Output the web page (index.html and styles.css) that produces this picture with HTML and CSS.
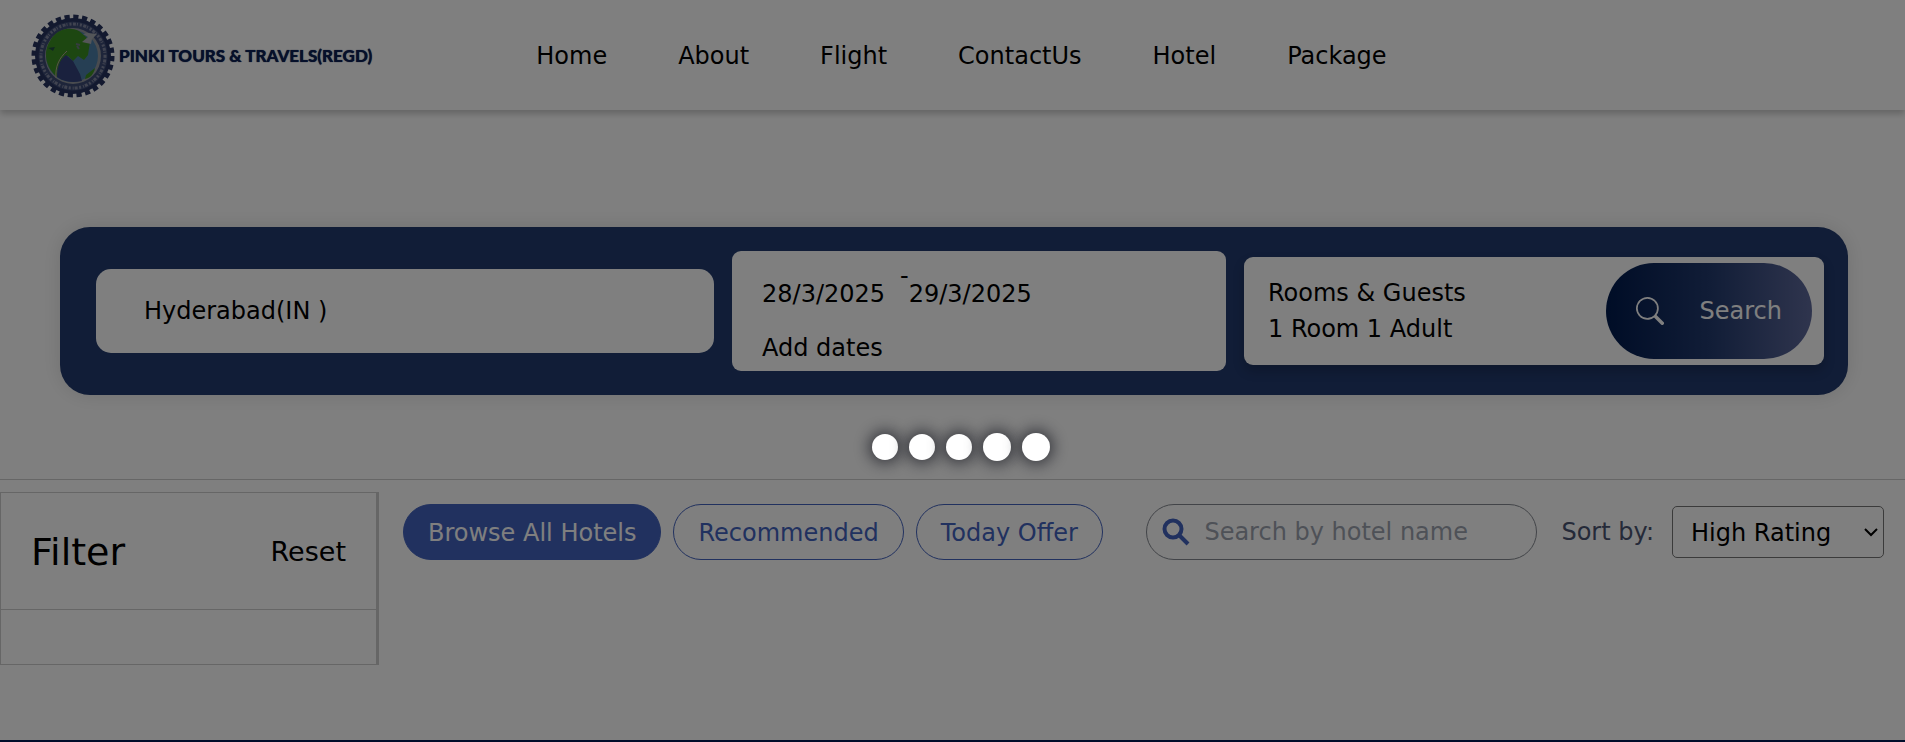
FILE: index.html
```html
<!DOCTYPE html>
<html lang="en">
<head>
  <meta charset="UTF-8">
  <meta name="viewport" content="width=device-width, initial-scale=1.0">
  <title>Pinki Tours &amp; Travels - Hotels</title>
  <link rel="stylesheet" href="styles.css">
</head>
<body>

  <header class="header">
    <a href="#" class="logo">
      <svg class="logo-badge" viewBox="0 0 86 86" aria-hidden="true">
        <circle cx="43" cy="43" r="38" fill="#3c4a74"/>
        <circle cx="43" cy="43" r="39" fill="none" stroke="#26335f" stroke-width="5" stroke-dasharray="5.2 3.55"/>
        <circle cx="43" cy="43" r="36" fill="none" stroke="#26335f" stroke-width="3"/>
        <circle cx="43" cy="43" r="32" fill="none" stroke="#8086a0" stroke-width="3" stroke-dasharray="2 1.5 3 1 1 2"/>
        <circle cx="43" cy="43" r="28" fill="#93979f"/>
        <circle cx="42" cy="43" r="26" fill="#4d7fa8"/>
        <path d="M27 64C15 54 13 38 20 28C26 17 38 13 49 18L56 24L60 29L58 42L54 47L48 43L43 48L38 43L34 45C28 51 27 57 27 64Z" fill="#3b8f22"/>
        <path d="M27 64C27 54 30 46 36 42L43 48L50 61L52 68C43 70 34 69 27 64Z" fill="#34437c"/>
        <path d="M56 62L65 55C64 61 60 65 55 66Z" fill="#3b8f22"/>
        <path d="M26 65C25 54 29 45 37 38" fill="none" stroke="#b5a698" stroke-width="1"/>
        <path d="M52 29L58 24L53 21L58 20L67 21L62 26L61 31Z" fill="#a8acb2"/>
        <path d="M46 31L50 32M47 33L49 36" stroke="#6c7880" stroke-width="2"/>
        <path d="M18 35L25 34L23 38L20 36" fill="#214c45"/>
      </svg>
      <span class="logo-text">PINKI TOURS &amp; TRAVELS(REGD)</span>
    </a>
    <nav class="nav">
      <a href="#">Home</a>
      <a href="#">About</a>
      <a href="#">Flight</a>
      <a href="#">ContactUs</a>
      <a href="#">Hotel</a>
      <a href="#">Package</a>
    </nav>
  </header>

  <form class="search-bar">
    <input type="text" class="location" aria-label="Location" value="Hyderabad(IN )">

    <div class="dates">
      <div class="date-row">
        <span class="date">28/3/2025</span>
        <span class="dash">-</span>
        <span class="date">29/3/2025</span>
      </div>
      <div>Add dates</div>
    </div>

    <div class="rooms">
      <div>
        <div>Rooms &amp; Guests</div>
        <div>1 Room 1 Adult</div>
      </div>
      <button type="button" class="search-btn">
        <svg width="28" height="28" viewBox="0 0 16 16" fill="currentColor" aria-hidden="true">
          <path d="M11.742 10.344a6.5 6.5 0 1 0-1.397 1.398h-.001q.044.06.098.115l3.85 3.85a1 1 0 0 0 1.415-1.414l-3.85-3.85a1 1 0 0 0-.115-.1zM12 6.5a5.5 5.5 0 1 1-11 0 5.5 5.5 0 0 1 11 0"/>
        </svg>
        <span>Search</span>
      </button>
    </div>
  </form>

  <main class="results">
    <aside class="filter">
      <div class="filter-head">
        <h2>Filter</h2>
        <button type="button" class="reset">Reset</button>
      </div>
      <div class="filter-body"></div>
    </aside>

    <section class="toolbar">
      <div class="tabs">
        <button type="button" class="tab active">Browse All Hotels</button>
        <button type="button" class="tab">Recommended</button>
        <button type="button" class="tab">Today Offer</button>
      </div>
      <div class="tools">
        <div class="hotel-search">
          <svg width="28" height="28" viewBox="0 0 28 28" fill="none" stroke="#4262be" aria-hidden="true">
            <circle cx="11" cy="11" r="8.5" stroke-width="4"/>
            <path d="M17 17L26 26" stroke-width="4"/>
          </svg>
          <input type="text" aria-label="Hotel name" placeholder="Search by hotel name">
        </div>
        <label for="sort">Sort by:</label>
        <div class="select-wrap">
          <select id="sort">
            <option>High Rating</option>
            <option>Low Rating</option>
          </select>
          <svg class="caret" width="14" height="10" viewBox="0 0 14 10" fill="none" stroke="#000" stroke-width="2" aria-hidden="true">
            <path d="M1 2L7 8L13 2"/>
          </svg>
        </div>
      </div>
    </section>
  </main>

  <footer class="footer"></footer>

  <!-- loading overlay -->
  <div class="overlay">
    <span class="dot"></span>
    <span class="dot"></span>
    <span class="dot"></span>
    <span class="dot big"></span>
    <span class="dot big"></span>
  </div>

</body>
</html>
```
FILE: styles.css
```css
* {
  box-sizing: border-box;
}
body {
  margin: 0;
  min-height: 100vh;
  display: flex;
  flex-direction: column;
  background: #fff;
  color: #000;
  font-family: Verdana, "DejaVu Sans", sans-serif;
  font-size: 24px;
  line-height: 36px;
}
input, select, button {
  font: inherit;
  color: inherit;
}
button {
  border: none;
  background: none;
  cursor: pointer;
}

/* header */
.header {
  display: flex;
  align-items: center;
  gap: 164px;
  height: 110px;
  padding: 2px 30px 0;
  box-shadow: 0 4px 6px rgba(0, 0, 0, 0.2);
}
.logo {
  display: flex;
  align-items: center;
  color: #0d2054;
  text-decoration: none;
}
.logo-badge {
  width: 86px;
  height: 86px;
}
.logo-text {
  padding-left: 3px;
  font-family: Lato, sans-serif;
  font-size: 17px;
  font-weight: 900;
  text-shadow: 0 0 1px #0d2054;
  white-space: nowrap;
}
.nav {
  display: flex;
  gap: 71px;
}
.nav a {
  color: #000;
  text-decoration: none;
}

/* search bar */
.search-bar {
  display: grid;
  grid-template-columns: 618fr 494fr 580fr;
  align-items: center;
  gap: 18px;
  margin: 117px 57px 84px 60px;
  padding: 24px 24px 24px 36px;
  border-radius: 30px;
  background: #223a6e;
  box-shadow: 0 0 20px rgba(0, 0, 0, 0.12);
}
.location {
  width: 100%;
  height: 84px;
  padding: 0 48px;
  border: none;
  border-radius: 15px;
  background: #fff;
}
.dates {
  display: flex;
  flex-direction: column;
  gap: 18px;
  padding: 25px 30px 5px;
  border-radius: 9px;
  background: #fff;
}
.date-row {
  display: flex;
}
.date {
  min-width: 129px;
}
.dash {
  padding-left: 9px;
  line-height: 0;
}
.rooms {
  display: flex;
  align-items: center;
  justify-content: space-between;
  padding: 6px 12px 6px 24px;
  border-radius: 9px;
  background: #fff;
  box-shadow: 0 6px 12px rgba(0, 0, 0, 0.2);
}
.search-btn {
  display: flex;
  align-items: center;
  gap: 36px;
  height: 96px;
  padding: 0 30px;
  border-radius: 48px;
  background: linear-gradient(90deg, #001a4d, #223a6e 50%, #5f6a9c);
  color: #fff;
}

/* results */
.results {
  display: flex;
  align-items: flex-start;
  gap: 24px;
  padding: 12px 21px 0 0;
  border-top: 1px solid #ccc;
}
.filter {
  flex: 0 0 379px;
  border: 1px solid #ccc;
  border-right-width: 3px;
}
.filter-head {
  display: flex;
  align-items: center;
  justify-content: space-between;
  padding: 31px 30px 29px;
  border-bottom: 1px solid #ccc;
}
.filter-head h2 {
  margin: 0;
  font-size: 38px;
  font-weight: normal;
  line-height: 56px;
}
.reset {
  padding: 0;
  font-size: 27px;
}
.filter-body {
  height: 54px;
}
.toolbar {
  flex: 1;
  display: flex;
  justify-content: space-between;
  padding-top: 12px;
}
.tabs, .tools {
  display: flex;
  align-items: center;
  gap: 12px;
  white-space: nowrap;
}
.tab {
  height: 56px;
  padding: 1px 24px 0;
  border: 1px solid #4262be;
  border-radius: 28px;
  color: #4262be;
}
.tab.active {
  background: #4262be;
  color: #fff;
}
.hotel-search {
  display: flex;
  align-items: center;
  gap: 14px;
  width: 391px;
  height: 56px;
  margin-right: 12px;
  padding: 0 15px;
  border: 1px solid #848890;
  border-radius: 28px;
}
.hotel-search input {
  flex: 1;
  min-width: 0;
  padding: 0;
  border: none;
  background: none;
}
.hotel-search input::placeholder {
  color: #9ca3af;
}
.tools label {
  margin-right: 6px;
  color: #4b5573;
}
.select-wrap {
  position: relative;
}
.select-wrap select {
  width: 212px;
  height: 52px;
  padding: 2px 18px 0;
  border: 1px solid #767676;
  border-radius: 5px;
  background: #fff;
  appearance: none;
}
.caret {
  position: absolute;
  top: 21px;
  right: 6px;
  pointer-events: none;
}

.footer {
  height: 2px;
  margin-top: auto;
  background: #001a54;
}

/* loading overlay */
.overlay {
  position: fixed;
  inset: 0;
  display: flex;
  align-items: center;
  justify-content: center;
  gap: 11px;
  padding: 152px 0 0 16px;
  background: rgba(0, 0, 0, 0.5);
}
.dot {
  width: 26px;
  height: 26px;
  border-radius: 50%;
  background: #fff;
  box-shadow: 0 0 15px 3px rgba(20, 22, 30, 0.7);
}
.dot.big {
  width: 28px;
  height: 28px;
}
```
